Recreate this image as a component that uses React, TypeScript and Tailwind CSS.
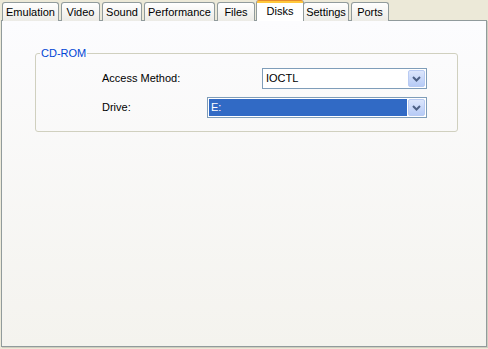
const tabs = [
  { label: "Emulation", w: 59 },
  { label: "Video", w: 41 },
  { label: "Sound", w: 42 },
  { label: "Performance", w: 73 },
  { label: "Files", w: 40 },
  { label: "Disks", w: 46, active: true },
  { label: "Settings", w: 48 },
  { label: "Ports", w: 40 },
];

function Chevron() {
  return (
    <svg width="9" height="6" viewBox="0 0 9 6">
      <path d="M1 1 L4.5 4.5 L8 1" fill="none" stroke="#4d6185" strokeWidth="2" />
    </svg>
  );
}

function Combo({ value, selected, width }: { value: string; selected?: boolean; width: number }) {
  return (
    <div
      className="h-[21px] border border-[#7f9db9] bg-white flex items-center p-[1px] gap-[1px]"
      style={{ width }}
    >
      <div
        className={
          selected
            ? "flex-1 h-full bg-[#316ac5] text-white flex items-center pl-[2px]"
            : "flex-1 h-full text-black flex items-center pl-[2px]"
        }
      >
        {value}
      </div>
      <div className="w-[17px] h-full rounded-[2px] border border-[#b9cbf3] bg-gradient-to-b from-[#dce6fc] to-[#b7cbf6] flex items-center justify-center">
        <Chevron />
      </div>
    </div>
  );
}

export default function App() {
  return (
    <div className="w-[488px] h-[349px] bg-[#ece9d8] font-['Liberation_Sans',Arial,sans-serif] text-[11px] text-black">
      {/* Tab strip */}
      <div className="flex items-end h-[21px] pl-[2px] relative z-10">
        {tabs.map((t) =>
          t.active ? (
            <div
              key={t.label}
              className="h-[21px] -mx-[1px] bg-white border-x border-[#919b9c] rounded-t-[3px] flex flex-col"
              style={{ width: t.w + 2 }}
            >
              <div className="h-[3px] bg-[#ffc83c] rounded-t-[2px] border-t border-[#e68b2c]" />
              <div className="flex-1 flex items-start justify-center pt-0">{t.label}</div>
            </div>
          ) : (
            <div
              key={t.label}
              className="h-[19px] mr-[2px] border border-b-0 border-[#919b9c] rounded-t-[3px] bg-gradient-to-b from-white to-[#ecebe6] flex items-center justify-center"
              style={{ width: t.w - 2 }}
            >
              {t.label}
            </div>
          )
        )}
      </div>

      {/* Panel */}
      <div className="-mt-[1px] ml-[1px] w-[486px] h-[327px] border border-[#919b9c] shadow-[1px_1px_0_#d0cebf] bg-gradient-to-b from-[#fcfcfe] to-[#f4f3ee] pt-[26px] pl-[33px] pr-[28px]">
        <fieldset className="border border-[#d0d0bf] rounded-[3px] px-0 pb-[13px]">
          <legend className="ml-[4px] px-[1px] text-[#0046d5] leading-[13px]">CD-ROM</legend>
          <div className="flex flex-col gap-[8px] pt-[8px]">
            <div className="flex items-center">
              <div className="w-[226px] pl-[66px] shrink-0">Access Method:</div>
              <Combo value="IOCTL" width={165} />
            </div>
            <div className="flex items-center">
              <div className="w-[171px] pl-[66px] shrink-0">Drive:</div>
              <Combo value="E:" selected width={220} />
            </div>
          </div>
        </fieldset>
      </div>
    </div>
  );
}
